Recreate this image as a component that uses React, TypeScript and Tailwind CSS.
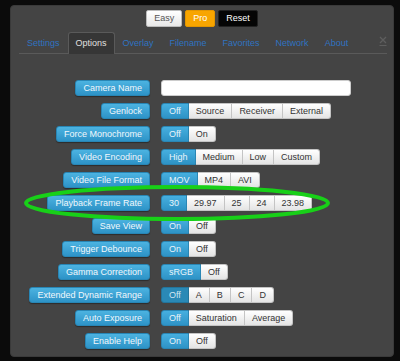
import React from "react";

type Row = {
  label: string;
  options?: string[];
  active?: number;
  pressed?: boolean;
  input?: boolean;
};

const rows: Row[] = [
  { label: "Camera Name", input: true },
  { label: "Genlock", options: ["Off", "Source", "Receiver", "External"], active: 0 },
  { label: "Force Monochrome", options: ["Off", "On"], active: 0 },
  { label: "Video Encoding", options: ["High", "Medium", "Low", "Custom"], active: 0 },
  { label: "Video File Format", options: ["MOV", "MP4", "AVI"], active: 0 },
  { label: "Playback Frame Rate", options: ["30", "29.97", "25", "24", "23.98"], active: 0 },
  { label: "Save View", options: ["On", "Off"], active: 0 },
  { label: "Trigger Debounce", options: ["On", "Off"], active: 0 },
  { label: "Gamma Correction", options: ["sRGB", "Off"], active: 0 },
  { label: "Extended Dynamic Range", options: ["Off", "A", "B", "C", "D"], active: 0, pressed: true },
  { label: "Auto Exposure", options: ["Off", "Saturation", "Average"], active: 0 },
  { label: "Enable Help", options: ["On", "Off"], active: 0 },
];

const tabs = ["Settings", "Options", "Overlay", "Filename", "Favorites", "Network", "About"];

function Segments({ row }: { row: Row }) {
  return (
    <div className="flex h-[16px]">
      {row.options!.map((opt, i) => {
        const on = i === row.active;
        const first = i === 0;
        const last = i === row.options!.length - 1;
        return (
          <div
            key={opt}
            className={
              "flex items-center px-[7px] border " +
              (first ? "rounded-l-[3px] " : "border-l-0 ") +
              (last ? "rounded-r-[3px] " : "") +
              (on
                ? row.pressed
                  ? "bg-[#2a89b6] border-[#23759c] text-[#cfe6f2]"
                  : "bg-gradient-to-b from-[#46afdf] to-[#2e93c6] border-[#2a86b4] text-[#e8f4fa]"
                : "bg-gradient-to-b from-[#ffffff] to-[#e4e4e4] border-[#c4c4c4] text-[#333]")
            }
          >
            {opt}
          </div>
        );
      })}
    </div>
  );
}

export default function App() {
  return (
    <div className="w-[400px] h-[361px] bg-[#0b0b0b] pt-[5px] pl-[10px] font-['Liberation_Sans',Arial,sans-serif] text-[9px] leading-none">
      <div className="relative w-[384px] h-[352px] bg-[#444444] border border-[#3a3a3a] rounded-[4px] px-[8px]">
        <div className="flex justify-center gap-[3px] pt-[4px]">
          <div className="h-[17px] flex items-center px-[7px] bg-gradient-to-b from-[#ffffff] to-[#e8e8e8] border border-[#bbb] text-[#555] rounded-[2px]">
            Easy
          </div>
          <div className="h-[17px] flex items-center px-[7px] bg-[#f8a500] border border-[#e29500] text-white rounded-[2px]">
            Pro
          </div>
          <div className="h-[17px] flex items-center px-[7px] bg-[#050505] border border-[#222] text-white rounded-[2px]">
            Reset
          </div>
        </div>

        <div className="relative mt-[5px] flex border-b border-[#5a5a5a] w-[368px]">
          {tabs.map((t) => (
            <div
              key={t}
              className={
                "h-[21px] flex items-center px-[7px] border border-b-0 rounded-t-[3px] " +
                (t === "Options"
                  ? "bg-[#363636] border-[#5a5a5a] text-[#e0e0e0] -mb-px h-[22px]"
                  : "border-transparent text-[#2f73c0]")
              }
            >
              {t}
            </div>
          ))}
          <svg className="absolute right-[0px] top-[4px]" width="8" height="10" viewBox="0 0 8 10">
            <path d="M1 1 L7 7 M7 1 L1 7" stroke="#5e5e5e" strokeWidth="1.3" />
            <path d="M0.5 9.5 L7.5 9.5" stroke="#5e5e5e" strokeWidth="1" />
          </svg>
        </div>

        <div className="mt-[26px] flex flex-col gap-[7px]">
          {rows.map((row) => (
            <div key={row.label} className="flex items-center h-[16px]">
              <div className="w-[131px] flex justify-end">
                <div className="h-[16px] flex items-center px-[7px] rounded-[3px] bg-gradient-to-b from-[#4cb3e1] to-[#2d93c7] border border-[#2886b5] text-[#f1f8fc] shadow-[0_1px_1px_rgba(0,0,0,0.35)]">
                  {row.label}
                </div>
              </div>
              <div className="ml-[11px]">
                {row.input ? (
                  <div className="w-[190px] h-[16px] bg-white rounded-[3px] border border-[#ccc]" />
                ) : (
                  <Segments row={row} />
                )}
              </div>
            </div>
          ))}
        </div>

        <svg
          className="absolute left-0 top-0 pointer-events-none"
          width="384"
          height="352"
          viewBox="0 0 384 352"
        >
          <ellipse cx="166" cy="197" rx="151" ry="16" fill="none" stroke="#18d018" strokeWidth="4" />
        </svg>
      </div>
    </div>
  );
}
